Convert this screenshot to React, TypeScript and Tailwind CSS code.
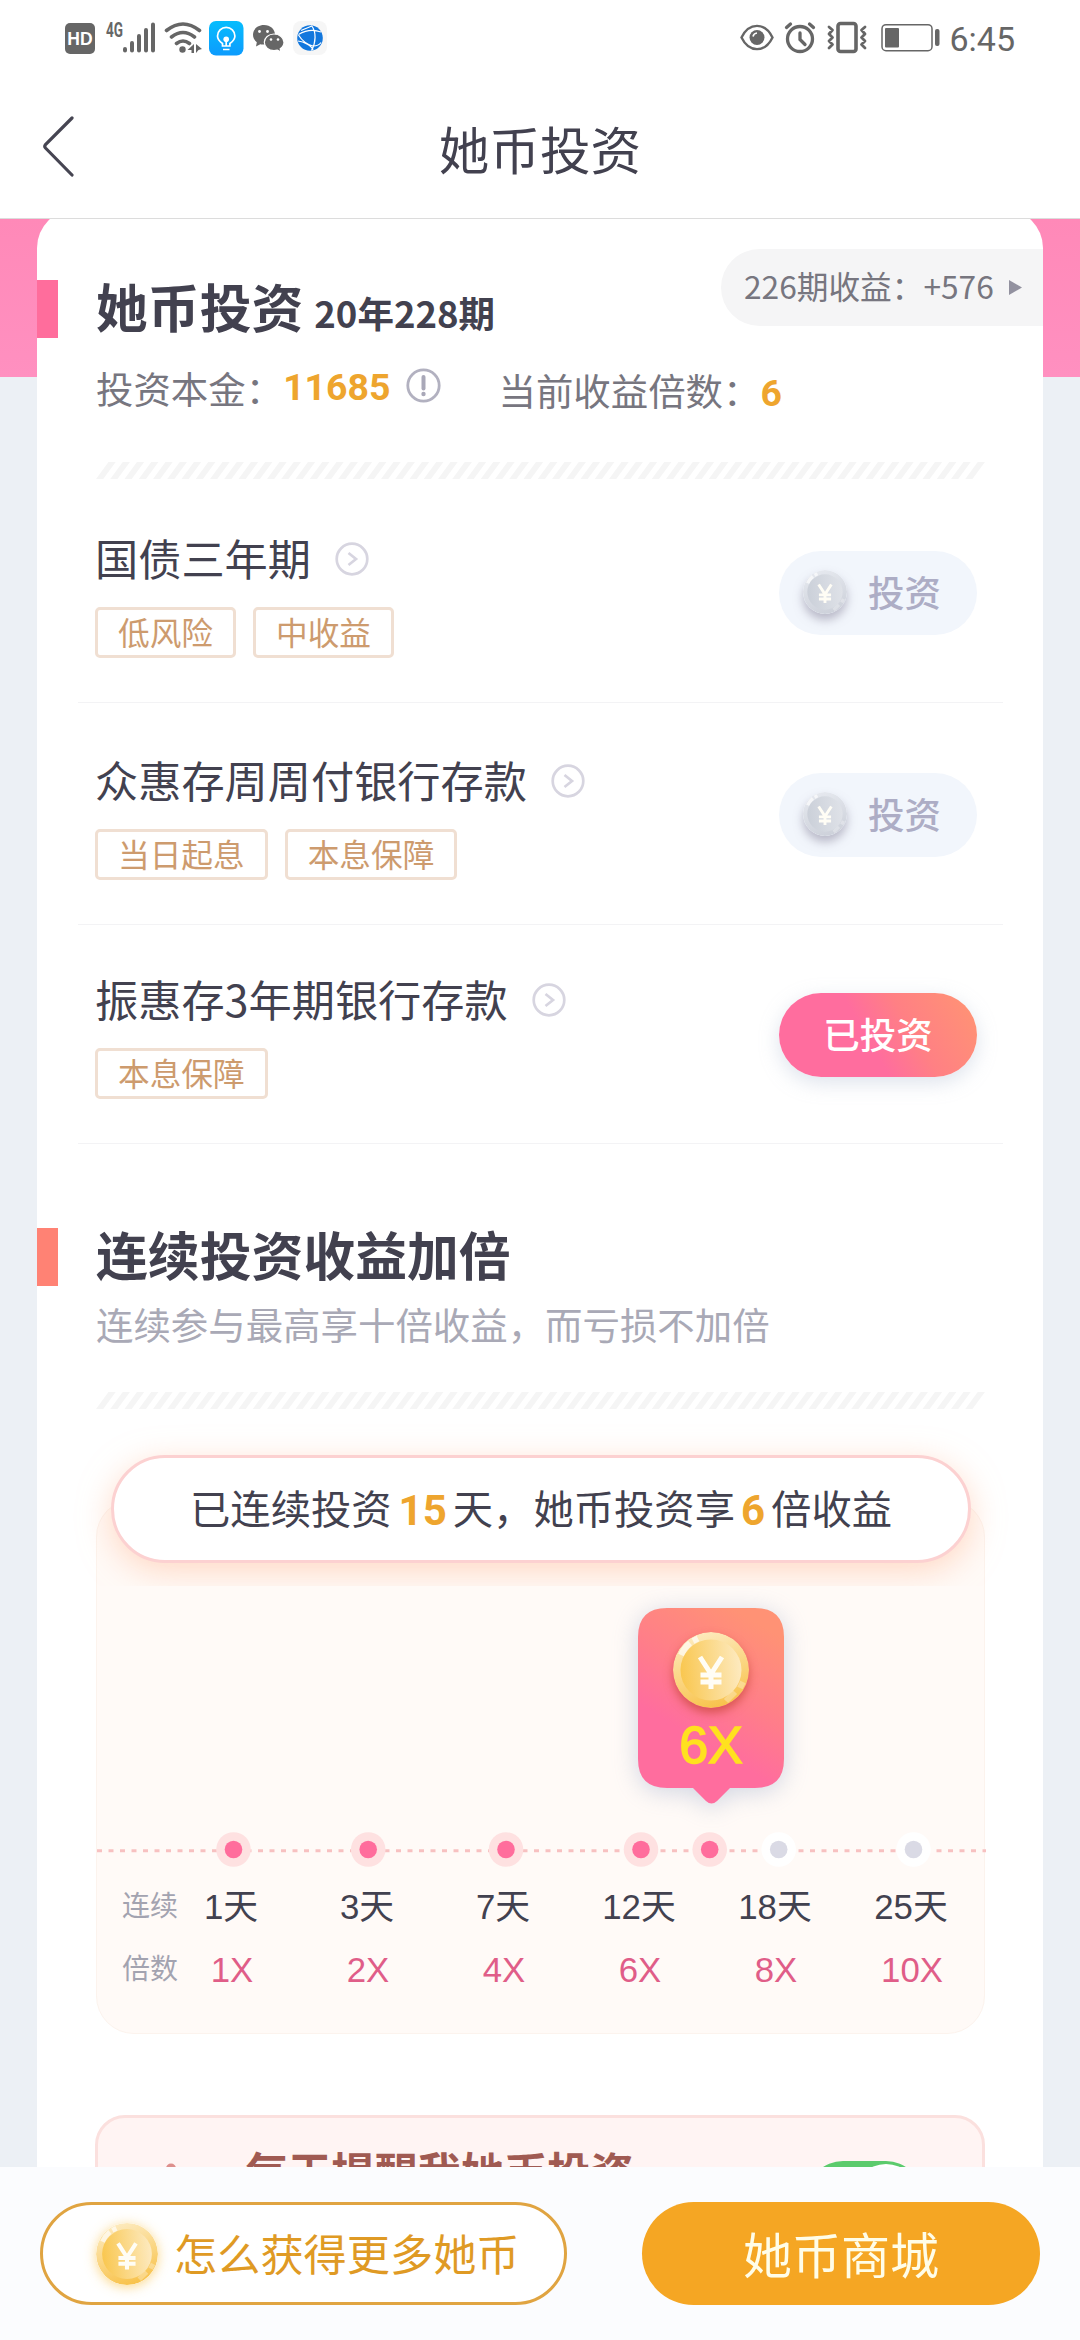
interface Product {
  name: string;
  tags: string[];
  invested: boolean;
  height: string;
}

const products: Product[] = [
  { name: '国债三年期', tags: ['低风险', '中收益'], invested: false, height: 'h-[224px]' },
  { name: '众惠存周周付银行存款', tags: ['当日起息', '本息保障'], invested: false, height: 'h-[222px]' },
  { name: '振惠存3年期银行存款', tags: ['本息保障'], invested: true, height: 'h-[219px]' },
];

const steps = [
  { days: '1天', times: '1X' },
  { days: '3天', times: '2X' },
  { days: '7天', times: '4X' },
  { days: '12天', times: '6X' },
  { days: '18天', times: '8X' },
  { days: '25天', times: '10X' },
];

// x offsets of the dots inside the timeline
const dots = [
  { x: 137, active: true },
  { x: 271.7, active: true },
  { x: 409.5, active: true },
  { x: 544.5, active: true },
  { x: 613.2, active: true },
  { x: 682.2, active: false },
  { x: 817, active: false },
];

function StatusBar() {
  return (
    <div className="flex h-[75px] items-start justify-between pt-[20px] pr-[65px] pl-[65px] text-[#666]">
      <div className="flex items-start">
        <svg className="mt-[3px] h-[31px] w-[30px]" viewBox="0 0 30 31">
          <rect width="30" height="31" rx="5" fill="currentColor" />
          <text x="15" y="22" textAnchor="middle" fontSize="17.5" fontWeight="bold" fontFamily="Liberation Sans, sans-serif" fill="#fff">
            HD
          </text>
        </svg>
        <svg className="mt-[1px] ml-[10px] h-[34px] w-[52px] overflow-visible" viewBox="0 0 52 34">
          <text x="1" y="15.500" textLength="17" lengthAdjust="spacingAndGlyphs" fontSize="20" fontWeight="bold" fontFamily="Roboto, sans-serif" fill="currentColor">
            4G
          </text>
          <g stroke="currentColor" strokeWidth="4" strokeLinecap="round">
            <path d="M20 28v1.500M27 22v7.500M34 15v14.500M41 9v20.500M48 3.500v26" />
          </g>
        </svg>
        <svg className="mt-[2px] ml-[7px] h-[32px] w-[38px]" viewBox="0 0 38 32">
          <g fill="none" stroke="currentColor" strokeWidth="3.600" strokeLinecap="round">
            <path d="M2.500 8.500Q19 -4.500 35.500 8.500M7.500 15Q19 6 30.500 15M12.500 21.500Q19 16.500 25.500 21.500" />
          </g>
          <circle cx="18.500" cy="27.500" r="3.200" fill="currentColor" />
          <path d="M30 22v9h-2.500v-3h-4zM32 22l6 5-3.500 1-2.500 3z" fill="currentColor" />
        </svg>
        <svg className="mt-[1px] ml-[7px] size-[35px]" viewBox="0 0 35 35">
          <defs>
            <linearGradient id="bulbBg" x1="0" y1="0" x2="0" y2="1">
              <stop offset="0" stopColor="#06bdfd" />
              <stop offset="1" stopColor="#0d9bfd" />
            </linearGradient>
          </defs>
          <rect width="34.500" height="34.500" rx="7" fill="url(#bulbBg)" />
          <g fill="none" stroke="#fff" strokeWidth="1.700">
            <path d="M13.500 25v-2.500c-3-2-5-4.500-5-7.500a8.700 8.700 0 0 1 17.400 0c0 3-2 5.500-5 7.500V25zM14 28.500h6.500" />
            <path d="M17.200 18v7" />
          </g>
          <circle cx="17.200" cy="18.300" r="2.800" fill="#fff" />
        </svg>
        <svg className="mt-[5px] ml-[8px] h-[28px] w-[34px]" viewBox="0 0 34 28">
          <path d="M12 0C5.500 0 1 4.300 1 9.800c0 3.200 1.500 5.600 3.800 7.400L4 21.500l4.300-2.300c1.500.4 2.500.4 3.700.4C18.500 19.600 23 15.300 23 9.800S18.500 0 12 0z" fill="currentColor" />
          <path d="M22 9c-5.500 0-9.700 3.700-9.700 8.300s4.200 8.300 9.700 8.300c1.200 0 2.300-.2 3.400-.5l3.600 2-.8-3.400c2.300-1.500 3.800-3.800 3.800-6.400C32 12.700 27.500 9 22 9z" fill="currentColor" stroke="#fff" strokeWidth="1.200" />
          <g fill="#fff">
            <circle cx="7.500" cy="6.500" r="1.400" />
            <circle cx="15.500" cy="6.500" r="1.400" />
            <circle cx="19" cy="14.500" r="1.300" />
            <circle cx="26" cy="14.500" r="1.300" />
          </g>
        </svg>
        <svg className="mt-[1px] ml-[7px] size-[34px]" viewBox="0 0 34 34">
          <rect width="34" height="34" rx="8" fill="#f6f6f6" />
          <circle cx="17" cy="17" r="12.800" fill="#1277dd" />
          <path d="M5.500 13.500C14 8.500 21 8.500 28 11M5 20c6 .5 14 5 15 9M5.500 14c3 5 8 9.500 15.500 11.500M18.500 4.500c5 6.500 4.500 17 0 25M8 9.500C12 7.500 17 6 19 5M20.500 25c3 0 6-1.500 7.500-3.500" fill="none" stroke="#fff" strokeWidth="1.200" />
        </svg>
      </div>

      <div className="flex items-start">
        <svg className="mt-[4px] h-[27px] w-[34px]" viewBox="0 0 34 27">
          <path d="M1.500 13.500C9-2 25-2 32.500 13.500 25 29 9 29 1.500 13.500z" fill="none" stroke="currentColor" strokeWidth="2.400" />
          <circle cx="17" cy="13.500" r="7.500" fill="currentColor" />
          <path d="M13 12.500a4.500 4.500 0 0 1 4-3.500" fill="none" stroke="#fff" strokeWidth="1.600" />
        </svg>
        <svg className="mt-[1px] ml-[10px] h-[34px] w-[32px]" viewBox="0 0 32 34">
          <g fill="none" stroke="currentColor" strokeWidth="3.300" strokeLinecap="round">
            <circle cx="16" cy="18" r="12.500" />
            <path d="M16 12v6.500l5 5M2.500 6.500L6.500 3M29.500 6.500L25.500 3" />
          </g>
        </svg>
        <svg className="mt-[1px] ml-[11px] h-[33px] w-[40px]" viewBox="0 0 40 33">
          <g fill="none" stroke="currentColor" strokeLinecap="round" strokeLinejoin="round">
            <rect x="11" y="2.500" width="18" height="28" rx="2.500" strokeWidth="3.600" />
            <path d="M2 6l3.500 3-3.500 4 3.500 3.500L2 20l3.500 3.500L2 27M38 6l-3.500 3 3.500 4-3.500 3.500L38 20l-3.500 3.500L38 27" strokeWidth="2.800" />
          </g>
        </svg>
        <svg className="mt-[3px] ml-[14px] h-[30px] w-[60px]" viewBox="0 0 60 30">
          <rect x="1" y="1.700" width="50" height="26" rx="4" fill="none" stroke="currentColor" strokeWidth="1.500" />
          <rect x="4" y="5" width="14" height="19.500" rx="1" fill="currentColor" />
          <rect x="54" y="6" width="4.500" height="17" rx="2" fill="currentColor" />
        </svg>
        <span className="ml-[8px] font-['Roboto'] text-[34px] leading-[38px]">6:45</span>
      </div>
    </div>
  );
}

function Coin({ tone, className }: { tone: 'gold' | 'silver'; className: string }) {
  const gold = tone === 'gold';
  return (
    <svg className={className} viewBox="0 0 76 76">
      <defs>
        <linearGradient id={`${tone}Rim`} x1="0.3" y1="0" x2="0.6" y2="1">
          <stop offset="0" stopColor={gold ? '#fdebc0' : '#e6e9ef'} />
          <stop offset="1" stopColor={gold ? '#f8c24a' : '#cdd1da'} />
        </linearGradient>
        <linearGradient id={`${tone}Face`} x1="0" y1="0.5" x2="1" y2="0.4">
          <stop offset="0" stopColor={gold ? '#f9c750' : '#cbd0d9'} />
          <stop offset="1" stopColor={gold ? '#fdeac0' : '#dfe2e8'} />
        </linearGradient>
      </defs>
      <circle cx="38" cy="38" r="38" fill={`url(#${tone}Rim)`} />
      <path d="M8 23A34 34 0 0 1 17 11M20 9L25 6.500" fill="none" stroke="#fff" strokeOpacity="0.65" strokeWidth="6" />
      <path d="M70 50L67 56M62 60L53 69" fill="none" stroke="#fff" strokeOpacity="0.3" strokeWidth="6" />
      <circle cx="38" cy="38" r="30.500" fill={`url(#${tone}Face)`} />
      <path d="M27 25L38 42L49 25M38 41V57M27.500 43H48.500M27.500 50H48.500" fill="none" stroke="#fffdf5" strokeWidth="5" />
    </svg>
  );
}

function Hatch() {
  return (
    <svg className="mr-[57px] ml-[59px] h-[17px] w-[890px]" viewBox="0 0 890 17">
      {Array.from({ length: 62 }, (_, i) => (
        <path key={i} d={`M${i * 14.25} 17L${i * 14.25 + 12.5} 0h7.200L${i * 14.25 + 7.2} 17z`} fill="#f5f5f5" />
      ))}
    </svg>
  );
}

function ProductRow({ product }: { product: Product }) {
  return (
    <div className={`mr-[40px] ml-[41px] flex items-end justify-between border-b border-[#f3f3f5] pr-[26px] pb-[44px] pl-[17px] ${product.height}`}>
      <div>
        <div className="flex items-center gap-[24px]">
          <h3 className="text-[43.2px] leading-[43px] text-[#42414f]">{product.name}</h3>
          <svg className="mt-[3px] size-[34px]" viewBox="0 0 34 34" fill="none" stroke="#d7d5e0" strokeWidth="2.700">
            <circle cx="17" cy="17" r="15.300" />
            <path d="M13.500 11L21 17L13.500 23" />
          </svg>
        </div>
        <div className="mt-[28px] flex gap-[17px]">
          {product.tags.map((tag) => (
            <span key={tag} className="h-[51px] rounded-[5px] border-3 border-[#f0dfd2] px-[20px] text-[31.68px] leading-[43px] text-[#cd9b6e]">
              {tag}
            </span>
          ))}
        </div>
      </div>
      {product.invested ? (
        <button className="mb-[22px] h-[84px] w-[198px] rounded-full bg-[linear-gradient(60deg,#ff6d9e_45%,#ff8084_65%,#ff9275_95%)] pb-[2px] text-[36.5px] font-medium text-white shadow-[0_6px_20px_rgba(160,175,200,0.35)]">
          已投资
        </button>
      ) : (
        <button className="mb-[23px] flex h-[84px] w-[198px] items-center rounded-full bg-[#f2f6fc] pl-[24px] text-[36.5px] font-medium text-[#adadc5]">
          <Coin tone="silver" className="mb-[2px] size-[44px] rounded-full shadow-[0_6px_10px_rgba(130,125,150,0.5)]" />
          <span className="ml-[21px] pb-[2px]">投资</span>
        </button>
      )}
    </div>
  );
}

function Bubble() {
  return (
    <div className="relative ml-[541px] h-[196px] w-[146px]">
      <svg className="size-full overflow-visible drop-shadow-[0_4px_12px_rgba(140,160,195,0.4)]" viewBox="0 0 146 196">
        <defs>
          <linearGradient id="bubbleBg" x1="0.2" y1="1" x2="0.65" y2="0">
            <stop offset="0.35" stopColor="#ff6d9e" />
            <stop offset="0.6" stopColor="#ff7c8b" />
            <stop offset="1" stopColor="#ff9275" />
          </linearGradient>
        </defs>
        <path d="M29 0H117Q146 0 146 29V151Q146 180 117 180H92L79 193Q73.500 198 68 193L55 180H29Q0 180 0 151V29Q0 0 29 0z" fill="url(#bubbleBg)" />
      </svg>
      <div className="absolute inset-x-0 top-[24px] flex flex-col items-center">
        <Coin tone="gold" className="size-[76px] rounded-full shadow-[0_5px_10px_rgba(190,60,40,0.6)]" />
        <span className="mt-[11px] font-['Liberation_Sans'] text-[52px] leading-[52px] text-[#ffe11f] [-webkit-text-stroke:1.5px_#ffe11f]">6X</span>
      </div>
    </div>
  );
}

function ReminderBell() {
  return (
    <svg className="mt-[45px] ml-[40px] h-[70px] w-[66px]" viewBox="0 0 66 70" fill="#dd8f8c">
      <circle cx="33" cy="5.500" r="5" />
      <path d="M33 9c13 0 20 9 20 21v14l7 10H6l7-10V30C13 18 20 9 33 9zM25 58h16a8 8 0 0 1-16 0z" />
    </svg>
  );
}

export default function App() {
  return (
    <div className="flex h-[2340px] w-[1080px] flex-col overflow-hidden bg-white font-['Noto_Sans_CJK_SC',sans-serif]">
      <StatusBar />

      {/* Nav bar */}
      <header className="relative flex h-[144px] items-start justify-center border-b border-[#dcdcdc] pt-[48px]">
        <svg className="absolute top-[41px] left-[42px] h-[61px] w-[33px]" viewBox="0 0 33 61">
          <path d="M30 2L3.500 28.500Q2 30.300 3.500 32L30 59" fill="none" stroke="#464552" strokeWidth="3.200" strokeLinecap="round" />
        </svg>
        <h1 className="text-[50.6px] leading-[50px] text-[#42414f]">她币投资</h1>
      </header>

      <main className="relative h-[1948px] overflow-hidden bg-[#ecf0f5]">
        <div className="absolute inset-x-0 top-0 h-[158px] bg-[linear-gradient(180deg,#ff89b8,#ff90c0)]" />
        <div className="relative mr-[37px] ml-[37px] -mt-[10px] h-[1980px] rounded-t-[39px] bg-white pt-[71px]">
          <div className="absolute top-[40px] right-0 flex h-[77px] w-[322px] items-center rounded-l-full bg-[#f5f5f6] pl-[23px] text-[#77767f]">
            <span className="pb-[3px] text-[31.68px] leading-none">226期收益：+576</span>
            <svg className="ml-[15px] h-[15px] w-[13px]" viewBox="0 0 13 15">
              <path d="M0 0L13 7.500L0 15z" fill="#92919f" />
            </svg>
          </div>

          <div className="flex h-[58px] items-center text-[#42414f]">
            <div className="h-[58px] w-[21px] bg-[#ff6d9c]" />
            <h2 className="flex items-baseline pl-[38px] text-[51.84px] leading-[52px] font-bold">
              她币投资
              <span className="ml-[11px] text-[36.5px]">20年228期</span>
            </h2>
          </div>
          <div className="mt-[29px] flex h-[42px] items-center pl-[59px] text-[37.44px] leading-[38px] text-[#77767f]">
            <span>投资本金：</span>
            <span className="pb-[2px] font-['Roboto'] text-[37.44px] font-bold text-[#eea52e]">11685</span>
            <svg className="mb-[6px] ml-[16px] size-[35px]" viewBox="0 0 35 35">
              <circle cx="17.500" cy="17.500" r="15.700" fill="none" stroke="#b2b1c0" strokeWidth="2.800" />
              <path d="M17.500 9v11.500" stroke="#a9a8b8" strokeWidth="4" strokeLinecap="round" />
              <circle cx="17.500" cy="26" r="2.200" fill="#a9a8b8" />
            </svg>
            <span className="ml-[57px] pt-[4px]">当前收益倍数：</span>
            <span className="pt-[10px] font-['Roboto'] text-[37.44px] font-bold text-[#eea52e]">6</span>
          </div>
          <div className="pt-[53px]">
            <Hatch />
          </div>

          {products.map((product) => (
            <ProductRow key={product.name} product={product} />
          ))}

          <div className="mt-[84px] flex h-[58px] items-center">
            <div className="h-[58px] w-[21px] bg-[#ff8274]" />
            <h2 className="pb-[7px] pl-[38px] text-[51.84px] leading-[52px] font-bold text-[#42414f]">连续投资收益加倍</h2>
          </div>
          <p className="mt-[20px] pl-[59px] text-[37.44px] leading-[37px] text-[#a9a9b6]">连续参与最高享十倍收益，而亏损不加倍</p>
          <div className="pt-[49px]">
            <Hatch />
          </div>

          {/* Streak summary, its glow is cut at the bottom edge */}
          <div className="relative z-10 h-[177px] overflow-hidden pt-[46px] pr-[72px] pl-[74px]">
            <div className="flex h-[108px] items-center rounded-full border-3 border-[#fcd1d1] bg-white pb-[4px] pl-[76px] text-[40.32px] leading-[42px] text-[#42414f] shadow-[0_8px_32px_rgba(255,190,155,0.55)]">
              <span>已连续投资</span>
              <span className="ml-[7px] pt-[8px] font-['Roboto'] text-[42px] font-bold text-[#eea52e]">15</span>
              <span className="ml-[6px]">天，她币投资享</span>
              <span className="ml-[6px] pt-[8px] font-['Roboto'] text-[42px] font-bold text-[#eea52e]">6</span>
              <span className="ml-[6px]">倍收益</span>
            </div>
          </div>

          <div className="mr-[58px] -mt-[87px] ml-[59px] h-[535px] rounded-[38px] border border-[#fcf3ed] bg-[#fffaf7] pt-[108px]">
            <Bubble />
            <svg className="mt-[28px] h-[35px] w-[889px]" viewBox="0 0 889 35">
              <path d="M0 18.700H889" stroke="#f7c1c1" strokeWidth="3" strokeDasharray="5 6.500" />
              {dots.map((dot) => (
                <g key={dot.x}>
                  <circle cx={dot.x - 0.5} cy="17.500" r="17.300" fill={dot.active ? '#fee1e1' : '#fff'} />
                  <circle cx={dot.x - 0.5} cy="17.500" r="8.800" fill={dot.active ? '#ff6d9c' : '#dadae5'} />
                </g>
              ))}
            </svg>
            <div className="mt-[22px] flex items-center pl-[25px] font-['Liberation_Sans','Noto_Sans_CJK_SC',sans-serif] text-[34.8px] leading-[35px] text-[#42414f]">
              <span className="w-[41px] text-[28px] whitespace-nowrap text-[#a3a3b0]">连续</span>
              {steps.map((step) => (
                <span key={step.days} className="w-[136px] text-center">{step.days}</span>
              ))}
            </div>
            <div className="mt-[28px] flex items-center pl-[25px] font-['Liberation_Sans','Noto_Sans_CJK_SC',sans-serif] text-[34.8px] leading-[35px] text-[#e05d88]">
              <span className="w-[42px] text-[28px] whitespace-nowrap text-[#a3a3b0]">倍数</span>
              {steps.map((step) => (
                <span key={step.times} className="w-[136px] text-center">{step.times}</span>
              ))}
            </div>
          </div>

          <div className="mt-[81px] mr-[58px] ml-[58px] flex h-[180px] items-start rounded-[30px] border-3 border-[#fbe0de] bg-[#fff4f3]">
            <ReminderBell />
            <span className="mt-[31px] ml-[41px] text-[43.2px] leading-[43px] font-bold text-[#a05a52]">每天提醒我她币投资</span>
            <span className="mt-[43px] mr-[60px] ml-auto flex h-[72px] w-[115px] justify-end rounded-full bg-[#5bcb6c] p-[3px]">
              <span className="size-[66px] rounded-full bg-white" />
            </span>
          </div>
        </div>
      </main>

      <footer className="flex h-[173px] items-start justify-between bg-[#fbfcfe] px-[40px] pt-[35px]">
        <button className="flex h-[103px] w-[527px] items-center rounded-full border-3 border-[#e0a441] bg-white pl-[53px] text-[43.2px] text-[#df9a24]">
          <Coin tone="gold" className="size-[62px] rounded-full shadow-[0_2px_12px_rgba(250,200,90,0.7)]" />
          <span className="ml-[16px] pb-[2px]">怎么获得更多她币</span>
        </button>
        <button className="h-[103px] w-[398px] rounded-full bg-[#f5a623] pb-[1px] text-[49px] text-[#fffde8]">她币商城</button>
      </footer>
    </div>
  );
}
